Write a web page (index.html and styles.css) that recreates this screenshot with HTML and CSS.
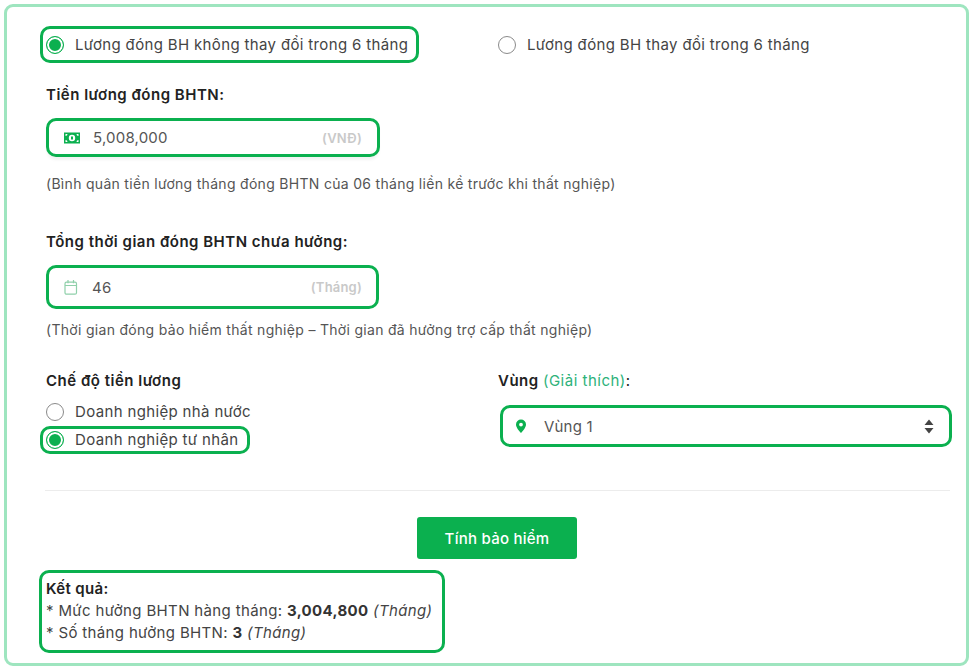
FILE: index.html
```html
<!DOCTYPE html>
<html lang="vi">
<head>
  <meta charset="UTF-8" />
  <title>Tính bảo hiểm thất nghiệp</title>
  <meta name="viewport" content="width=device-width, initial-scale=1.0" />
  <link rel="stylesheet" href="styles.css">
</head>
<body>
  <form class="frame" onsubmit="event.preventDefault();">
    <div class="salary-type">
      <label class="radio radio-on">
        <input type="radio" name="salaryType" checked />
        <span>Lương đóng BH không thay đổi trong 6 tháng</span>
      </label>
      <label class="radio">
        <input type="radio" name="salaryType" />
        <span>Lương đóng BH thay đổi trong 6 tháng</span>
      </label>
    </div>

    <div class="field-label first-label">Tiền lương đóng BHTN:</div>
    <div class="input-box money-box">
      <svg class="icon" width="16" height="12" viewBox="0 0 16 12">
        <path fill="#0bb04f" fill-rule="evenodd" d="M0 .5h16v11H0zM8 2.800a3.200 3.200 0 1 0 0 6.400 3.200 3.200 0 0 0 0-6.400zM1.500 2v2a2 2 0 0 0 2-2zM12.500 2a2 2 0 0 0 2 2V2zM1.500 8v2h2a2 2 0 0 0-2-2zM14.500 8a2 2 0 0 0-2 2h2z"/>
        <rect x="7" y="4.500" width="2" height="3" fill="#0bb04f"/>
      </svg>
      <input class="value" type="text" value="5,008,000" />
      <span class="unit">(VNĐ)</span>
    </div>
    <p class="hint money-hint">(Bình quân tiền lương tháng đóng BHTN của 06 tháng liền kề trước khi thất nghiệp)</p>

    <div class="field-label time-label">Tổng thời gian đóng BHTN chưa hưởng:</div>
    <div class="input-box time-box">
      <svg class="icon" width="16" height="17" viewBox="0 0 16 17" fill="none" stroke="#8fd0aa" stroke-width="1.200">
        <rect x="2" y="3.200" width="11.500" height="12" rx="1.500"/>
        <path d="M2 6.500h11.500M5 1v3.200M10.500 1v3.200"/>
      </svg>
      <input class="value" type="text" value="46" />
      <span class="unit">(Tháng)</span>
    </div>
    <p class="hint time-hint">(Thời gian đóng bảo hiểm thất nghiệp – Thời gian đã hưởng trợ cấp thất nghiệp)</p>

    <div class="columns">
      <div class="col-left">
        <div class="field-label">Chế độ tiền lương</div>
        <div class="company-type">
          <label class="radio">
            <input type="radio" name="company" />
            <span>Doanh nghiệp nhà nước</span>
          </label>
          <label class="radio radio-on">
            <input type="radio" name="company" checked />
            <span>Doanh nghiệp tư nhân</span>
          </label>
        </div>
      </div>
      <div class="col-right">
        <div class="field-label">Vùng <a class="explain" href="#">(Giải thích)</a><span class="colon">:</span></div>
        <div class="input-box region-box">
          <svg class="icon" width="12" height="15" viewBox="0 0 12 15">
            <path fill="#0bb04f" fill-rule="evenodd" d="M6 .5A5 5 0 0 0 1 5.500c0 3 3.200 6.500 5 8.500 1.800-2 5-5.500 5-8.500a5 5 0 0 0-5-5zM6 3.700a1.900 1.900 0 1 1 0 3.800 1.900 1.900 0 0 1 0-3.800z"/>
          </svg>
          <select class="value region-select">
            <option>Vùng 1</option>
            <option>Vùng 2</option>
            <option>Vùng 3</option>
            <option>Vùng 4</option>
          </select>
          <svg class="sort" width="10" height="15" viewBox="0 0 10 15">
            <path fill="#444" d="M5 .5l4.500 5.500H.5zM.5 9h9L5 14.500z"/>
          </svg>
        </div>
      </div>
    </div>

    <hr class="divider" />

    <div class="actions">
      <button type="submit" class="submit">Tính bảo hiểm</button>
    </div>

    <div class="result">
      <div class="result-title">Kết quả:</div>
      <div>* Mức hưởng BHTN hàng tháng: <b>3,004,800</b> <i>(Tháng)</i></div>
      <div>* Số tháng hưởng BHTN: <b>3</b> <i>(Tháng)</i></div>
    </div>
  </form>
</body>
</html>
```

FILE: styles.css
```css
* {
  margin: 0;
  padding: 0;
  box-sizing: border-box;
  font-family: Inter, "Noto Sans", sans-serif;
}

body {
  background: #fff;
  color: #444;
  font-size: 15px;
  line-height: 22px;
  letter-spacing: 0.35px;
  padding: 4px;
}

.frame {
  width: 965px;
  height: 662px;
  border: 3px solid #9ee5bf;
  border-radius: 9px;
  padding: 19px 16px 0 39px;
  overflow: hidden;
}

/* radios */
.salary-type {
  display: grid;
  grid-template-columns: 452px 1fr;
  margin-left: -6px;
}

.radio {
  display: inline-flex;
  align-items: center;
  gap: 11px;
  height: 28px;
  padding: 0 8px 0 3px;
  border: 3px solid transparent;
  border-radius: 10px;
  cursor: pointer;
  justify-self: start;
}

.salary-type .radio {
  height: 37px;
}

.radio-on {
  border-color: #0bb04f;
}

.radio input {
  appearance: none;
  flex: none;
  width: 18px;
  height: 18px;
  border: 1px solid #8a8a8a;
  border-radius: 50%;
  background: #fff;
}

.radio input:checked {
  border-color: #0bb04f;
  background: #0bb04f;
  box-shadow: inset 0 0 0 2px #fff;
}

/* fields */
.field-label {
  font-weight: 600;
  letter-spacing: 0.5px;
  color: #222;
}

.first-label {
  margin-top: 21px;
}

.input-box {
  display: flex;
  align-items: center;
  border: 3px solid #0bb04f;
  border-radius: 10px;
  background: #fff;
}

.money-box {
  width: 334px;
  height: 39px;
  margin-top: 12px;
  padding: 0 15px;
  box-shadow: 0 4px 3px -1px #f3f3f3;
}

.time-box {
  width: 333px;
  height: 44px;
  margin-top: 12px;
  padding: 0 14px;
}

.icon {
  flex: none;
}

.value {
  flex: 1;
  min-width: 0;
  margin-left: 13px;
  border: none;
  outline: none;
  background: transparent;
  color: #555;
  font-size: 15px;
  letter-spacing: 0.2px;
}

.unit {
  color: #c9c9c9;
  font-size: 13px;
  font-weight: 600;
  letter-spacing: 0.2px;
}

.hint {
  font-size: 14px;
  letter-spacing: 0.3px;
  color: #555;
}

.money-hint {
  margin-top: 16px;
}

.time-label {
  margin-top: 36px;
}

.time-hint {
  margin-top: 10px;
}

/* bottom columns */
.columns {
  display: grid;
  grid-template-columns: 452px 1fr;
  margin-top: 29px;
}

.company-type {
  display: flex;
  flex-direction: column;
  align-items: flex-start;
  margin: 6px 0 0 -6px;
}

.explain {
  color: #2db27a;
  font-weight: 400;
  text-decoration: none;
}

.colon {
  font-weight: 400;
}

.region-box {
  width: 452px;
  height: 42px;
  margin: 13px 0 0 2px;
  padding: 0 15px 0 12px;
}

.region-select {
  appearance: none;
  margin-left: 17px;
  cursor: pointer;
}

.sort {
  flex: none;
}

.divider {
  width: 905px;
  height: 1px;
  margin: 36px 0 0 -1px;
  border: none;
  background: #ececec;
}

.actions {
  display: flex;
  justify-content: center;
  margin: 26px 2px 0 0;
}

.submit {
  width: 160px;
  height: 42px;
  border: none;
  border-radius: 3px;
  background: #0bb04f;
  color: #fff;
  font-size: 15px;
  font-weight: 500;
  letter-spacing: 0.25px;
  cursor: pointer;
}

.result {
  width: 406px;
  height: 83px;
  margin: 11px 0 0 -7px;
  padding: 5px 4px;
  border: 3px solid #0bb04f;
  border-radius: 10px;
}

.result-title {
  font-weight: 600;
  color: #222;
}

.result b {
  font-weight: 700;
  color: #333;
}
```
